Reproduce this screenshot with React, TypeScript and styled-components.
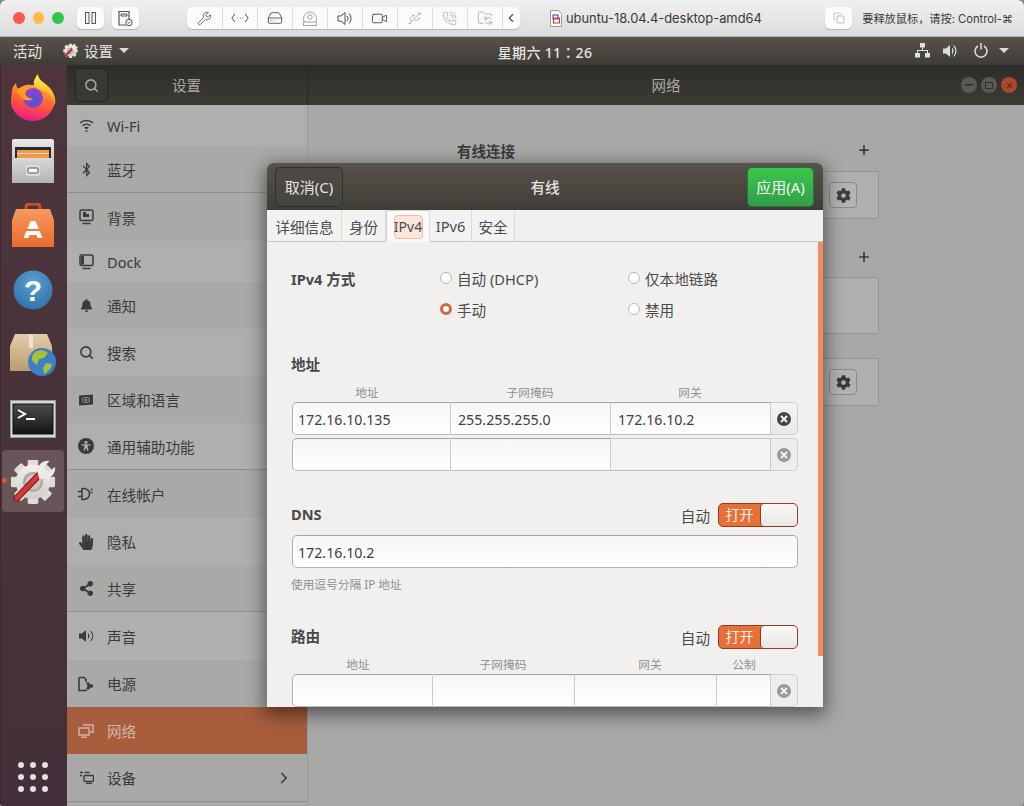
import React from "react";
import styled, { createGlobalStyle } from "styled-components";
import { Wrench, HardDrive, Video, Usb, PhoneCall, FolderSync, ChevronLeft, ChevronRight, Copy, Search, Plus } from "lucide-react";
import { FaBluetoothB, FaBell, FaHandPaper, FaShareAlt, FaCog } from "react-icons/fa";

const UI_FONT = `"Noto Sans", "Noto Sans CJK SC", sans-serif`;

const GlobalStyle = createGlobalStyle`
  html, body { margin: 0; padding: 0; background: #8b8b8b; }
  * { box-sizing: border-box; }
  body { font-family: ${UI_FONT}; }
`;

const Frame = styled.div`
  position: relative;
  width: 1024px;
  height: 806px;
  overflow: hidden;
  display: flex;
  flex-direction: column;
  border-radius: 6px 6px 4px 4px;
  background: #45323a;
`;

/* mac vm toolbar */
const MacBar = styled.div`
  height: 37px;
  flex: none;
  display: flex;
  align-items: center;
  padding: 0 11px 0 13px;
  background: linear-gradient(#f0f0f0, #dcdcdc);
  border-bottom: 1px solid #b1b1b1;
`;
const Light = styled.span<{ $c: string }>`
  width: 12px;
  height: 12px;
  margin-right: 8px;
  border-radius: 50%;
  background: ${(p) => p.$c};
`;
const MacButton = styled.div<{ $ml?: number }>`
  width: 28px;
  height: 22px;
  margin-left: ${(p) => p.$ml ?? 0}px;
  display: flex;
  align-items: center;
  justify-content: center;
  background: #fbfbfb;
  border-radius: 5px;
  box-shadow: 0 1px 1px #b5b5b5;
  color: #555;
`;
const MacGroup = styled.div`
  margin-left: 48px;
  display: flex;
  height: 22px;
  background: #fbfbfb;
  border-radius: 5px;
  box-shadow: 0 1px 1px #b5b5b5;
`;
const MacCell = styled.div<{ $w?: number; $dim?: boolean }>`
  width: ${(p) => p.$w ?? 35}px;
  display: flex;
  align-items: center;
  justify-content: center;
  border-right: 1px solid #dedede;
  color: ${(p) => (p.$dim ? "#a6a6a6" : "#4f4f4f")};
  &:last-child { border-right: 0; }
`;
const VmTitle = styled.div`
  margin-left: 30px;
  width: 285px;
  display: flex;
  align-items: center;
  gap: 4px;
  font: 12.9px "Inter", "Liberation Sans", sans-serif;
  color: #3a3a3a;
`;
const ReleaseHint = styled.div`
  margin-left: 10px;
  font: 11.2px "Inter", "Noto Sans CJK SC", sans-serif;
  white-space: nowrap;
  color: #3a3a3a;
`;

/* gnome top bar */
const TopBar = styled.div`
  height: 28px;
  flex: none;
  display: flex;
  align-items: center;
  padding: 0 15px 1px 13px;
  background: linear-gradient(#57534b, #3e3c37);
  color: #e6e4e0;
  font-size: 14.5px;
`;
const AppMenu = styled.div`
  margin-left: 21px;
  display: flex;
  align-items: center;
  gap: 6px;
`;
const Clock = styled.div`
  flex: 1;
  padding: 3px 0 0 46px;
  text-align: center;
  font: 500 14px "Noto Sans", "Noto Sans CJK TC", sans-serif;
  letter-spacing: 0.3px;
`;
const Tray = styled.div`
  display: flex;
  align-items: center;
  gap: 11px;
  & > :nth-child(1) { margin-right: 2px; }
  & > :nth-child(2) { margin-right: 4px; }
`;
const DownCaret = styled.span`
  width: 0;
  height: 0;
  border-left: 5px solid transparent;
  border-right: 5px solid transparent;
  border-top: 5px solid #dedcd8;
`;

const Desktop = styled.div`
  flex: 1;
  display: flex;
  min-height: 0;
`;

/* dock */
const Dock = styled.div`
  width: 67px;
  flex: none;
  display: flex;
  flex-direction: column;
  align-items: center;
  padding-right: 2px;
  background: linear-gradient(#4d353b, #44303a);
  border-left: 1px solid #3a2a30;
`;
const DockSlot = styled.div<{ $active?: boolean; $h: number }>`
  position: relative;
  width: 62px;
  height: ${(p) => p.$h}px;
  flex: none;
  display: flex;
  align-items: center;
  justify-content: center;
  border-radius: 4px;
  background: ${(p) => (p.$active ? "#695559" : "transparent")};
`;
const RunningDot = styled.span`
  position: absolute;
  left: 0;
  top: 28px;
  width: 5px;
  height: 5px;
  border-radius: 50%;
  background: #e95420;
`;
const AppsGrid = styled.div`
  margin-top: auto;
  margin-bottom: 14px;
  display: grid;
  grid-template-columns: repeat(3, 6px);
  gap: 6px;
`;
const AppsDot = styled.span`
  width: 6px;
  height: 6px;
  border-radius: 50%;
  background: #e4e1e2;
`;

/* settings window, dimmed behind the dialog */
const SettingsWindow = styled.div`
  flex: 1;
  display: flex;
  flex-direction: column;
  background: #a8a8a6;
`;
const HeaderBar = styled.div`
  height: 40px;
  flex: none;
  display: flex;
  background: linear-gradient(#2d2c28, #3c3a35);
  color: #a9a8a5;
  font-size: 14.5px;
`;
const HeaderLeft = styled.div`
  width: 241px;
  flex: none;
  display: flex;
  align-items: center;
  padding-left: 8px;
  border-right: 1px solid #282723;
`;
const SearchToggle = styled.div`
  width: 33px;
  height: 34px;
  display: flex;
  align-items: center;
  justify-content: center;
  color: #a4a3a0;
  border: 1px solid #262522;
  border-radius: 4px;
  background: #393834;
`;
const HeaderLeftTitle = styled.div`
  margin-left: 64px;
  padding-bottom: 2px;
`;
const HeaderRight = styled.div`
  flex: 1;
  display: flex;
  align-items: center;
  padding-right: 7px;
`;
const HeaderRightTitle = styled.div`
  flex: 1;
  padding: 0 0 2px 72px;
  text-align: center;
`;
const WinControls = styled.div`
  display: flex;
  gap: 4px;
  height: 34px;
  align-items: center;
  padding-left: 8px;
  border-left: 1px solid #33322e;
`;
const WinButton = styled.div<{ $close?: boolean }>`
  width: 16px;
  height: 16px;
  display: flex;
  align-items: center;
  justify-content: center;
  border-radius: 50%;
  background: ${(p) => (p.$close ? "#a8492a" : "#5a5954")};
  color: ${(p) => (p.$close ? "#5e2b1a" : "#2f2e2a")};
`;
const Panes = styled.div`
  flex: 1;
  display: flex;
  min-height: 0;
`;
const Sidebar = styled.div`
  width: 241px;
  flex: none;
  border-right: 1px solid #9b9b99;
`;
const SideRow = styled.div<{ $h: number; $shade?: boolean; $active?: boolean; $sep?: boolean }>`
  height: ${(p) => p.$h}px;
  display: flex;
  align-items: center;
  padding: 0 14px 0 11px;
  gap: 13px;
  font-size: 14.6px;
  color: ${(p) => (p.$active ? "#d0b5a8" : "#3b3b39")};
  background: ${(p) => (p.$active ? "#a85d3d" : p.$shade ? "#a9a9a7" : "#afafad")};
  border-bottom: ${(p) => (p.$sep ? "1px solid #8f8f8d" : "0")};
`;
const SideIcon = styled.span`
  width: 16px;
  height: 16px;
  flex: none;
  display: flex;
  align-items: center;
  justify-content: center;
`;
const SideLabel = styled.span`
  flex: 1;
`;
const Overview = styled.div`
  flex: 1;
  padding: 35px 0 0 148px;
  color: #3b3b39;
  font-size: 14.5px;
`;
const OverviewHead = styled.div<{ $mt?: number }>`
  width: 423px;
  height: 20px;
  margin-top: ${(p) => p.$mt ?? 0}px;
  display: flex;
  align-items: center;
  justify-content: space-between;
  padding: 0 8px 0 1px;
  font-weight: 700;
`;
const OverviewCard = styled.div<{ $h: number; $mt: number }>`
  width: 423px;
  height: ${(p) => p.$h}px;
  margin-top: ${(p) => p.$mt}px;
  display: flex;
  align-items: center;
  justify-content: flex-end;
  padding-right: 21px;
  background: #afafad;
  border: 1px solid #949492;
  border-radius: 2px;
`;
const GearButton = styled.div`
  width: 28px;
  height: 26px;
  display: flex;
  align-items: center;
  justify-content: center;
  border: 1px solid #8a8a88;
  border-radius: 4px;
  background: #b3b3b1;
`;

/* dialog */
const Dialog = styled.div`
  position: absolute;
  left: 267px;
  top: 163px;
  width: 556px;
  height: 544px;
  display: flex;
  flex-direction: column;
  overflow: hidden;
  border-radius: 6px 6px 0 0;
  background: #f2f0ee;
  box-shadow: 0 5px 18px 3px rgba(0, 0, 0, 0.48);
`;
const DialogHeader = styled.div`
  height: 47px;
  flex: none;
  display: flex;
  align-items: center;
  padding: 0 9px 0 8px;
  background: linear-gradient(#57534b, #3f3d37);
  color: #e4e2de;
  font-size: 14.6px;
`;
const CancelButton = styled.div`
  width: 68px;
  height: 40px;
  display: flex;
  align-items: center;
  justify-content: center;
  border: 1px solid #2f2e2a;
  border-radius: 5px;
  background: linear-gradient(#4e4b44, #45433d);
  font-size: 15px;
`;
const DialogTitle = styled.div`
  flex: 1;
  text-align: center;
  font-weight: 500;
`;
const ApplyButton = styled.div`
  width: 67px;
  height: 40px;
  display: flex;
  align-items: center;
  justify-content: center;
  border: 1px solid #2f6f3a;
  border-radius: 5px;
  background: linear-gradient(#3ac650, #329f47);
  color: #f4f8f2;
  font-size: 15px;
`;
const TabStrip = styled.div`
  height: 32px;
  flex: none;
  display: flex;
  padding-left: 1px;
  border-bottom: 1px solid #c9c7c3;
  font-size: 14.6px;
  color: #4b4d4d;
`;
const Tab = styled.div<{ $w: number; $active?: boolean }>`
  width: ${(p) => p.$w}px;
  display: flex;
  align-items: center;
  justify-content: center;
  padding-top: ${(p) => (p.$active ? 0 : 1)}px;
  border-right: 1px solid #dcdad6;
  background: ${(p) => (p.$active ? "#fbfafa" : "#f3f2f0")};
  border-top: ${(p) => (p.$active ? "1px solid #d3d1cd" : "0")};
  border-left: ${(p) => (p.$active ? "1px solid #d3d1cd" : "0")};
  margin-bottom: ${(p) => (p.$active ? "-1px" : "0")};
  border-radius: ${(p) => (p.$active ? "4px 4px 0 0" : "0")};
`;
const TabFocus = styled.span`
  width: 29px;
  height: 24px;
  display: flex;
  align-items: center;
  justify-content: center;
  background: #fbe6dc;
  border: 1px solid #f2b9a0;
  border-radius: 4px;
  font-size: 14px;
`;
const DialogBody = styled.div`
  position: relative;
  flex: 1;
  padding: 27px 25px 0 24px;
  font-size: 14.6px;
  color: #4a4c4c;
`;
const Scrollbar = styled.div`
  position: absolute;
  right: 0;
  top: 0;
  width: 5px;
  height: 414px;
  background: #f08a5f;
`;
const MethodGrid = styled.div`
  display: grid;
  grid-template-columns: 149px 188px 1fr;
  grid-auto-rows: 20px;
  row-gap: 11px;
`;
const Strong = styled.div`
  font-weight: 700;
  color: #47494a;
  line-height: 20px;
`;
const Radio = styled.div`
  display: flex;
  align-items: center;
  gap: 5px;
  line-height: 20px;
`;
const RadioMark = styled.span<{ $on?: boolean }>`
  width: 12px;
  height: 12px;
  margin-top: -2px;
  border-radius: 50%;
  border: ${(p) => (p.$on ? "3.5px solid #d9663a" : "1px solid #bcbab6")};
  background: #fff;
`;
const SectionTitle = styled(Strong)<{ $mt: number }>`
  margin-top: ${(p) => p.$mt}px;
`;
const ColumnHeads = styled.div<{ $mt: number; $cols: string }>`
  margin-top: ${(p) => p.$mt}px;
  display: grid;
  grid-template-columns: ${(p) => p.$cols};
  height: 16px;
  padding-left: 1px;
  font-size: 11.7px;
  line-height: 14px;
  color: #8d9091;
  text-align: center;
`;
const TableRow = styled.div<{ $mt: number; $cols: string }>`
  margin-top: ${(p) => p.$mt}px;
  display: grid;
  grid-template-columns: ${(p) => p.$cols};
  height: 33px;
  padding-left: 1px;
  flex: none;
`;
const Cell = styled.div<{ $first?: boolean; $off?: boolean }>`
  display: flex;
  align-items: center;
  padding: 2px 0 0 ${(p) => (p.$first ? 5 : 7)}px;
  font-size: 14.2px;
  color: #3f3f3f;
  background: ${(p) => (p.$off ? "#f4f3f2" : "linear-gradient(#f6f6f5, #ffffff)")};
  border: 1px solid #bdbcb9;
  border-top-color: ${(p) => (p.$off ? "#c6c5c2" : "#a5a4a1")};
  border-left: ${(p) => (p.$first ? "1px solid #b3b2af" : "0")};
  border-right: 1px solid #cbcac7;
  border-radius: ${(p) => (p.$first ? "5px 0 0 5px" : "0")};
`;
const DeleteCell = styled.div<{ $off?: boolean }>`
  display: flex;
  align-items: center;
  justify-content: center;
  background: ${(p) => (p.$off ? "#eeedeb" : "linear-gradient(#f6f5f4, #e9e8e6)")};
  border: 1px solid #cfcecb;
  border-left: 0;
  border-radius: 0 5px 5px 0;
`;
const DeleteDot = styled.span<{ $off?: boolean }>`
  width: 14px;
  height: 14px;
  display: flex;
  align-items: center;
  justify-content: center;
  border-radius: 50%;
  background: ${(p) => (p.$off ? "#9b9a96" : "#444442")};
  color: #f2f1ef;
`;
const SwitchRow = styled.div<{ $mt: number }>`
  margin-top: ${(p) => p.$mt}px;
  height: 24px;
  display: flex;
  align-items: center;
`;
const SwitchTitle = styled(Strong)`
  flex: 1;
  padding-bottom: 2px;
`;
const SwitchCaption = styled.span`
  margin-right: 8px;
`;
const SwitchTrack = styled.div`
  width: 80px;
  height: 24px;
  display: flex;
  border: 1px solid #8c3f22;
  border-radius: 5px;
  overflow: hidden;
  background: #e96f39;
`;
const SwitchOn = styled.span`
  width: 41px;
  text-align: center;
  line-height: 22px;
  font-size: 14px;
  color: #fdf3ec;
`;
const SwitchThumb = styled.span`
  flex: 1;
  background: linear-gradient(#f9f8f7, #e9e7e5);
  border-left: 1px solid #8c3f22;
  border-radius: 4px;
`;
const DnsInput = styled.div`
  margin-top: 8px;
  height: 33px;
  margin-left: 1px;
  display: flex;
  align-items: center;
  padding: 2px 0 0 5px;
  font-size: 14.2px;
  color: #3f3f3f;
  background: linear-gradient(#f6f6f5, #ffffff);
  border: 1px solid #b3b2af;
  border-top-color: #a5a4a1;
  border-radius: 5px;
`;
const Hint = styled.div`
  margin-top: 9px;
  font-size: 11.7px;
  line-height: 14px;
  height: 16px;
  color: #8d9091;
`;

/* drawings */
const CodeDots = () => (
  <svg width="18" height="10" viewBox="0 0 18 10" fill="none" stroke="#4f4f4f">
    <path d="M4 1 0.8 5 4 9M14 1l3.2 4L14 9" />
    <path d="M6.5 5h.8M9 5h.8M11.4 5h.8" />
  </svg>
);
const Webcam = () => (
  <svg width="16" height="17" viewBox="0 0 16 17" fill="none" stroke="#a6a6a6">
    <path d="M2.5 12a6.5 6.5 0 1 1 11 0" />
    <circle cx="8" cy="7" r="2.2" />
    <rect x="1.5" y="12" width="13" height="3.5" />
  </svg>
);
const MacSpeaker = () => (
  <svg width="16" height="15" viewBox="0 0 16 15" fill="none" stroke="#4f4f4f">
    <path d="M1 5h3l4-3.5v12L4 10H1z" />
    <path d="M10 5a3.5 3.5 0 0 1 0 5M12 2.5a7 7 0 0 1 0 10" />
  </svg>
);
const Snapshot = () => (
  <svg width="16" height="17" viewBox="0 0 16 17" fill="none" stroke="#555">
    <path d="M9 15H2V1.5h10V9" strokeWidth="1.2" />
    <path d="M4 4h6v2H4z" />
    <circle cx="12" cy="12.5" r="3.2" />
    <path d="m10.6 12.6 1.2.6 1.6-1.4" />
  </svg>
);
const DocIcon = () => (
  <svg width="12" height="17" viewBox="0 0 12 17">
    <path d="M.5.5h8l3 3v13H.5z" fill="#fff" stroke="#9a9a9a" />
    <rect x="3" y="5" width="5" height="4" fill="none" stroke="#2b3fc2" />
    <rect x="3.5" y="8" width="6" height="5" fill="none" stroke="#e0202a" />
  </svg>
);
const TrayNetwork = () => (
  <svg width="15" height="15" viewBox="0 0 15 15" fill="#e2e0dc">
    <rect x="5" y="0" width="5" height="4.5" />
    <rect x="0" y="10" width="5" height="4.5" />
    <rect x="10" y="10" width="5" height="4.5" />
    <path d="M7 4.5h1V7h5v3h-1V8H3v2H2V7h5z" />
  </svg>
);
const TrayVolume = () => (
  <svg width="16" height="14" viewBox="0 0 16 14" fill="#dedcd8">
    <path d="M0 4.5h3L7 1v12L3 9.500H0z" />
    <path d="M9 3.500a5 5 0 0 1 0 7V3.500z" />
    <path d="M11.300 1.300a8.500 8.500 0 0 1 0 11.400l-1-.8a7 7 0 0 0 0-9.800z" />
  </svg>
);
const TrayPower = () => (
  <svg width="14" height="15" viewBox="0 0 14 15" fill="none" stroke="#e2e0dc" strokeWidth="1.5">
    <path d="M4 3a6 6 0 1 0 6 0" />
    <path d="M7 0v6.500" />
  </svg>
);
const GEAR_TEETH = [0, 45, 90, 135, 180, 225, 270, 315];
const GearWrench = ({ size, id }: { size: number; id: string }) => (
  <svg width={size} height={size} viewBox="0 0 48 48">
    <defs>
      <linearGradient id={id} x1="0" y1="0" x2="0" y2="1">
        <stop offset="0" stopColor="#f1f0ee" />
        <stop offset="1" stopColor="#cfcdca" />
      </linearGradient>
    </defs>
    {GEAR_TEETH.map((a) => (
      <rect key={a} x="18.500" y="2" width="11" height="12" rx="1.500" fill="#dedcd9" transform={`rotate(${a} 24 25)`} />
    ))}
    <circle cx="24" cy="25" r="18" fill={`url(#${id})`} />
    <circle cx="24" cy="25" r="10.500" fill="#a9a6a4" />
    <circle cx="24" cy="25" r="8" fill="#c9c6c3" />
    <path stroke="#8e1d1d" strokeWidth="7" strokeLinecap="round" d="M7 42 33 15" />
    <path stroke="#d63a35" strokeWidth="4.500" strokeLinecap="round" d="M7 42 33 15" />
    <path fill="#ecebe9" d="M29 16c-2-7 4-14 12-13l-5 6 1 4 4 1 6-5c1 8-6 14-13 12l-3 2z" />
  </svg>
);
const Firefox = () => (
  <svg width="46" height="47" viewBox="0 0 46 47">
    <defs>
      <linearGradient id="ffBody" x1="0.7" y1="0" x2="0.4" y2="1">
        <stop offset="0" stopColor="#ffb52e" />
        <stop offset="0.55" stopColor="#ff5a36" />
        <stop offset="1" stopColor="#e6198a" />
      </linearGradient>
      <linearGradient id="ffTop" x1="0.5" y1="0" x2="0.5" y2="1">
        <stop offset="0" stopColor="#fff04a" />
        <stop offset="1" stopColor="#ff9a1f" />
      </linearGradient>
      <radialGradient id="ffGlobe" cx="0.55" cy="0.6" r="0.6">
        <stop offset="0" stopColor="#4f52cf" />
        <stop offset="1" stopColor="#9a3fd0" />
      </radialGradient>
    </defs>
    <path d="M2 20C1 17 3 12 6 9c0 3 1 5 3 6 3-3 7-5 12-4 12 0 24 9 24 14 0 12-10 22-22 22S0 37 1 26c0-2 0-4 1-6z" fill="url(#ffBody)" />
    <path d="M28 0c0 6 6 8 11 13 5 5 7 12 6 18-2-8-7-13-13-15-6-2-9-4-8-9 1-3 2-5 4-7z" fill="url(#ffTop)" />
    <circle cx="23" cy="24" r="10" fill="url(#ffGlobe)" />
    <path d="M6 17c4-5 11-6 17-4-4 1-7 3-8 6 1 4 4 5 8 6-5 3-11 1-13-3-1-2-2-3-4-5z" fill="#ff9d1e" />
  </svg>
);
const Cabinet = () => (
  <svg width="42" height="44" viewBox="0 0 42 44">
    <defs>
      <linearGradient id="cabBody" x1="0" y1="0" x2="0" y2="1">
        <stop offset="0" stopColor="#e9e9e7" />
        <stop offset="1" stopColor="#a8a8a6" />
      </linearGradient>
      <linearGradient id="cabFront" x1="0" y1="0" x2="0" y2="1">
        <stop offset="0" stopColor="#d8d8d6" />
        <stop offset="1" stopColor="#b4b4b2" />
      </linearGradient>
    </defs>
    <rect x="0" y="0" width="42" height="44" rx="2" fill="url(#cabBody)" />
    <rect x="3" y="8" width="36" height="12" fill="#2a2a2a" />
    <rect x="5" y="11" width="32" height="9" fill="#ef9a4a" />
    <rect x="5" y="14" width="32" height="1" fill="#f8dcb8" />
    <path d="M0 21l3-2h36l3 2v23H0z" fill="url(#cabFront)" />
    <rect x="14" y="26" width="14" height="11" rx="2" fill="#dcdcda" />
    <rect x="16" y="29" width="10" height="5" rx="1" fill="#fafafa" stroke="#555" />
  </svg>
);
const Bag = () => (
  <svg width="42" height="44" viewBox="0 0 42 44">
    <defs>
      <linearGradient id="bagBody" x1="0" y1="0" x2="0" y2="1">
        <stop offset="0" stopColor="#f59a60" />
        <stop offset="1" stopColor="#ec6a2c" />
      </linearGradient>
    </defs>
    <path d="M14 10V4c0-2 2-3 4-3h6c2 0 4 1 4 3v6" fill="none" stroke="#c9502a" strokeWidth="3" />
    <path d="M4 6h34l4 11v27H0V17z" fill="url(#bagBody)" />
    <path d="M18.500 18h5l7 17h-5l-1-3H17.500l-1 3h-5z" fill="#fff" />
    <rect x="12" y="26" width="18" height="2" fill="#ec7a3c" />
  </svg>
);
const Help = () => (
  <svg width="40" height="40" viewBox="0 0 40 40">
    <defs>
      <radialGradient id="helpBody" cx="0.5" cy="0.3" r="0.8">
        <stop offset="0" stopColor="#5c9fd0" />
        <stop offset="1" stopColor="#2a6ea5" />
      </radialGradient>
    </defs>
    <circle cx="20" cy="20" r="19.500" fill="url(#helpBody)" />
    <text x="20" y="31" textAnchor="middle" fontFamily="Liberation Sans, sans-serif" fontWeight="700" fontSize="30" fill="#fff">?</text>
  </svg>
);
const Package = () => (
  <svg width="46" height="42" viewBox="0 0 46 42">
    <defs>
      <linearGradient id="boxBody" x1="0" y1="0" x2="0" y2="1">
        <stop offset="0" stopColor="#e3ccaa" />
        <stop offset="1" stopColor="#bb9c70" />
      </linearGradient>
    </defs>
    <path d="M5 0h32l5 12v25H0V12z" fill="url(#boxBody)" />
    <rect x="19" y="0" width="4" height="14" fill="#efe2cc" />
    <circle cx="32" cy="28" r="14" fill="#3b7fc4" />
    <path d="M25 18c5-3 10-2 13 1l-4 5-5 1-2 6-4-3c-2-3-1-7 2-10zM36 29l6 1c-1 5-4 8-8 10l-1-6z" fill="#a9c13a" />
  </svg>
);
const Terminal = () => (
  <svg width="46" height="38" viewBox="0 0 46 38">
    <defs>
      <linearGradient id="termBody" x1="0" y1="0" x2="0" y2="1">
        <stop offset="0" stopColor="#4d4d4d" />
        <stop offset="1" stopColor="#141414" />
      </linearGradient>
    </defs>
    <rect x="0.500" y="0.500" width="45" height="37" fill="#d8d8d6" stroke="#9a9a98" />
    <rect x="3" y="4" width="40" height="30" fill="url(#termBody)" stroke="#111" />
    <path d="M8 10l7 4-7 4" fill="none" stroke="#fff" strokeWidth="2" />
    <rect x="16" y="18" width="9" height="2" fill="#fff" />
  </svg>
);

const Wifi = () => (
  <svg width="15" height="14" viewBox="0 0 15 14" fill="none" stroke="#3b3b39" strokeWidth="1.500">
    <path d="M1 4a9.500 9.500 0 0 1 13 0" />
    <path d="M3.500 6.800a6 6 0 0 1 8 0" />
    <path d="M5.700 9.300a3 3 0 0 1 3.600 0" />
    <circle cx="7.500" cy="12" r="1" fill="#3b3b39" stroke="none" />
  </svg>
);
const Monitor = ({ dock }: { dock?: boolean }) => (
  <svg width="15" height="16" viewBox="0 0 15 16" fill="none" stroke="#3b3b39">
    <rect x="1" y="1" width="13" height="10.500" rx="1.500" strokeWidth="1.500" />
    {dock ? <rect x="2" y="2" width="3" height="8.500" fill="#3b3b39" stroke="none" /> : <path d="M4 8h6V5H7v-2H4z" fill="#3b3b39" stroke="none" />}
    <path d="M3.500 14.500h8" strokeWidth="1.500" />
  </svg>
);
const Region = () => (
  <svg width="16" height="12" viewBox="0 0 16 12">
    <path d="M1 1.500 15 .5v10L1 11.500z" fill="#3b3b39" />
    <ellipse cx="8" cy="6" rx="3.500" ry="2.500" fill="none" stroke="#afafad" strokeWidth="0.800" />
    <circle cx="8" cy="6" r="1" fill="#afafad" />
  </svg>
);
const Accessible = () => (
  <svg width="16" height="16" viewBox="0 0 16 16">
    <circle cx="8" cy="8" r="8" fill="#3b3b39" />
    <circle cx="8" cy="4.300" r="1.500" fill="#afafad" />
    <path d="M3.500 6.300h9v1.200H9.500l1 5h-1.300L8 9.500l-1.200 3H5.500l1-5h-3z" fill="#afafad" />
  </svg>
);
const Plug = () => (
  <svg width="16" height="14" viewBox="0 0 16 14" fill="none" stroke="#3b3b39">
    <path d="M0 4.500h4M0 9.500h4" strokeWidth="1.500" />
    <path d="M4 1.500h2a5.500 5.500 0 0 1 0 11H4z" strokeWidth="1.500" />
    <path d="M15 2.500c-1.500-1-2.500 0-2 1s1.500 1 1.500 2-1.500 1-2 .5" strokeWidth="0.900" />
  </svg>
);
const Speaker = () => (
  <svg width="15" height="12" viewBox="0 0 15 12" fill="#3b3b39">
    <path d="M0 3.500h3L7 0v12L3 8.500H0z" />
    <path d="M9 3a4 4 0 0 1 0 6zM12 .8a7 7 0 0 1 0 10.400l-.8-.7a5.800 5.800 0 0 0 0-9z" />
  </svg>
);
const Battery = () => (
  <svg width="16" height="16" viewBox="0 0 16 16">
    <path d="M1 1.500h5l2 2V6M1 1.500v13h8" fill="none" stroke="#3b3b39" strokeWidth="1.600" />
    <path d="M8 6.500h3l1.500 2H15v3h-2.500l-1.500 2H8l1.500-3.500z" fill="#3b3b39" />
  </svg>
);
const NetworkIcon = () => (
  <svg width="16" height="14" viewBox="0 0 16 14" fill="none" stroke="#cdb3a5" strokeWidth="1.500">
    <rect x="1" y="4" width="10" height="7" />
    <path d="M3 13.300h6M5 1h10v7h-3" />
  </svg>
);
const Devices = () => (
  <svg width="15" height="13" viewBox="0 0 15 13" fill="none" stroke="#3b3b39" strokeWidth="1.400">
    <path d="M1 1.500h3M5.500 1.500h5M1 4.500h2" />
    <rect x="5" y="4.500" width="9.500" height="6" rx="1" />
    <path d="M7 12.500h6" />
  </svg>
);
const CrossGlyph = ({ size = 8, w = 2 }: { size?: number; w?: number }) => (
  <svg width={size} height={size} viewBox="0 0 8 8" stroke="currentColor" strokeWidth={w}>
    <path d="M1 1l6 6M7 1 1 7" />
  </svg>
);

const SIDE_ROWS = [
  { h: 41, label: "Wi-Fi", icon: <Wifi /> },
  { h: 47, label: "蓝牙", icon: <FaBluetoothB size={15} />, shade: true, sep: true },
  { h: 48, label: "背景", icon: <Monitor />, shade: true },
  { h: 41, label: "Dock", icon: <Monitor dock /> },
  { h: 47, label: "通知", icon: <FaBell size={13} />, shade: true },
  { h: 47, label: "搜索", icon: <Search size={15} strokeWidth={2.5} /> },
  { h: 47, label: "区域和语言", icon: <Region />, shade: true },
  { h: 47, label: "通用辅助功能", icon: <Accessible />, sep: true },
  { h: 48, label: "在线帐户", icon: <Plug />, shade: true },
  { h: 47, label: "隐私", icon: <FaHandPaper size={16} /> },
  { h: 47, label: "共享", icon: <FaShareAlt size={15} />, shade: true, sep: true },
  { h: 48, label: "声音", icon: <Speaker /> },
  { h: 47, label: "电源", icon: <Battery />, shade: true },
  { h: 47, label: "网络", icon: <NetworkIcon />, active: true },
  { h: 48, label: "设备", icon: <Devices />, shade: true, sep: true, more: true },
];

const ADDR_COLS = "159px 160px 160px 27px";
const ROUTE_COLS = "141px 142px 142px 54px 27px";

export default function App() {
  return (
    <Frame>
      <GlobalStyle />
      <MacBar>
        <Light $c="#fc5753" />
        <Light $c="#fdbc40" />
        <Light $c="#33c748" />
        <MacButton $ml={5}>
          <svg width="11" height="12" viewBox="0 0 11 12" fill="none" stroke="#555">
            <rect x="0.500" y="0.500" width="3.500" height="11" />
            <rect x="7" y="0.500" width="3.500" height="11" />
          </svg>
        </MacButton>
        <MacButton $ml={8}>
          <Snapshot />
        </MacButton>
        <MacGroup>
          <MacCell $w={36}><Wrench size={15} strokeWidth={1.300} /></MacCell>
          <MacCell><CodeDots /></MacCell>
          <MacCell><HardDrive size={16} strokeWidth={1.300} /></MacCell>
          <MacCell $dim><Webcam /></MacCell>
          <MacCell><MacSpeaker /></MacCell>
          <MacCell><Video size={17} strokeWidth={1.300} /></MacCell>
          <MacCell $dim><Usb size={15} strokeWidth={1.200} /></MacCell>
          <MacCell $dim><PhoneCall size={15} strokeWidth={1.200} /></MacCell>
          <MacCell $dim><FolderSync size={16} strokeWidth={1.200} /></MacCell>
          <MacCell $w={17}><ChevronLeft size={14} /></MacCell>
        </MacGroup>
        <VmTitle>
          <DocIcon />
          ubuntu-18.04.4-desktop-amd64
        </VmTitle>
        <MacButton><Copy size={12} strokeWidth={1.200} color="#9a9a9a" /></MacButton>
        <ReleaseHint>要释放鼠标，请按: Control-⌘</ReleaseHint>
      </MacBar>

      <TopBar>
        活动
        <AppMenu>
          <GearWrench size={15} id="gearSmall" />
          设置
          <DownCaret />
        </AppMenu>
        <Clock>星期六 11：26</Clock>
        <Tray>
          <TrayNetwork />
          <TrayVolume />
          <TrayPower />
          <DownCaret />
        </Tray>
      </TopBar>

      <Desktop>
        <Dock>
          <DockSlot $h={64}><Firefox /></DockSlot>
          <DockSlot $h={64}><Cabinet /></DockSlot>
          <DockSlot $h={64}><Bag /></DockSlot>
          <DockSlot $h={65}><Help /></DockSlot>
          <DockSlot $h={66}><Package /></DockSlot>
          <DockSlot $h={62}><Terminal /></DockSlot>
          <DockSlot $h={62} $active>
            <RunningDot />
            <GearWrench size={46} id="gearLarge" />
          </DockSlot>
          <AppsGrid>
            {Array.from({ length: 9 }).map((_, i) => (
              <AppsDot key={i} />
            ))}
          </AppsGrid>
        </Dock>

        <SettingsWindow>
          <HeaderBar>
            <HeaderLeft>
              <SearchToggle><Search size={15} strokeWidth={2.500} /></SearchToggle>
              <HeaderLeftTitle>设置</HeaderLeftTitle>
            </HeaderLeft>
            <HeaderRight>
              <HeaderRightTitle>网络</HeaderRightTitle>
              <WinControls>
                <WinButton><svg width="8" height="2"><rect width="8" height="1.500" fill="currentColor" /></svg></WinButton>
                <WinButton><svg width="8" height="7" fill="none" stroke="currentColor"><rect x="0.500" y="0.500" width="7" height="6" /></svg></WinButton>
                <WinButton $close><CrossGlyph size={7} w={1.300} /></WinButton>
              </WinControls>
            </HeaderRight>
          </HeaderBar>
          <Panes>
            <Sidebar>
              {SIDE_ROWS.map((r) => (
                <SideRow key={r.label} $h={r.h} $shade={r.shade} $active={r.active} $sep={r.sep}>
                  <SideIcon>{r.icon}</SideIcon>
                  <SideLabel>{r.label}</SideLabel>
                  {r.more && <ChevronRight size={18} strokeWidth={2.200} />}
                </SideRow>
              ))}
            </Sidebar>
            <Overview>
              <OverviewHead>
                有线连接
                <Plus size={14} strokeWidth={3} />
              </OverviewHead>
              <OverviewCard $h={48} $mt={11}>
                <GearButton><FaCog size={15} /></GearButton>
              </OverviewCard>
              <OverviewHead $mt={28}>
                <span />
                <Plus size={14} strokeWidth={3} />
              </OverviewHead>
              <OverviewCard $h={57} $mt={10} />
              <OverviewCard $h={48} $mt={24}>
                <GearButton><FaCog size={15} /></GearButton>
              </OverviewCard>
            </Overview>
          </Panes>
        </SettingsWindow>
      </Desktop>

      <Dialog>
        <DialogHeader>
          <CancelButton>取消(C)</CancelButton>
          <DialogTitle>有线</DialogTitle>
          <ApplyButton>应用(A)</ApplyButton>
        </DialogHeader>
        <TabStrip>
          <Tab $w={74}>详细信息</Tab>
          <Tab $w={44}>身份</Tab>
          <Tab $w={44} $active><TabFocus>IPv4</TabFocus></Tab>
          <Tab $w={42}>IPv6</Tab>
          <Tab $w={43}>安全</Tab>
        </TabStrip>
        <DialogBody>
          <Scrollbar />
          <MethodGrid>
            <Strong>IPv4 方式</Strong>
            <Radio><RadioMark />自动 (DHCP)</Radio>
            <Radio><RadioMark />仅本地链路</Radio>
            <span />
            <Radio><RadioMark $on />手动</Radio>
            <Radio><RadioMark />禁用</Radio>
          </MethodGrid>

          <SectionTitle $mt={34}>地址</SectionTitle>
          <ColumnHeads $mt={11} $cols="150px 176px 144px">
            <span>地址</span>
            <span>子网掩码</span>
            <span>网关</span>
          </ColumnHeads>
          <TableRow $mt={1} $cols={ADDR_COLS}>
            <Cell $first>172.16.10.135</Cell>
            <Cell>255.255.255.0</Cell>
            <Cell>172.16.10.2</Cell>
            <DeleteCell><DeleteDot><CrossGlyph /></DeleteDot></DeleteCell>
          </TableRow>
          <TableRow $mt={3} $cols={ADDR_COLS}>
            <Cell $first />
            <Cell />
            <Cell $off />
            <DeleteCell $off><DeleteDot $off><CrossGlyph /></DeleteDot></DeleteCell>
          </TableRow>

          <SwitchRow $mt={32}>
            <SwitchTitle>DNS</SwitchTitle>
            <SwitchCaption>自动</SwitchCaption>
            <SwitchTrack>
              <SwitchOn>打开</SwitchOn>
              <SwitchThumb />
            </SwitchTrack>
          </SwitchRow>
          <DnsInput>172.16.10.2</DnsInput>
          <Hint>使用逗号分隔 IP 地址</Hint>

          <SwitchRow $mt={32}>
            <SwitchTitle>路由</SwitchTitle>
            <SwitchCaption>自动</SwitchCaption>
            <SwitchTrack>
              <SwitchOn>打开</SwitchOn>
              <SwitchThumb />
            </SwitchTrack>
          </SwitchRow>
          <ColumnHeads $mt={8} $cols="132px 158px 136px 52px">
            <span>地址</span>
            <span>子网掩码</span>
            <span>网关</span>
            <span>公制</span>
          </ColumnHeads>
          <TableRow $mt={1} $cols={ROUTE_COLS}>
            <Cell $first />
            <Cell />
            <Cell />
            <Cell />
            <DeleteCell $off><DeleteDot $off><CrossGlyph /></DeleteDot></DeleteCell>
          </TableRow>
        </DialogBody>
      </Dialog>
    </Frame>
  );
}
